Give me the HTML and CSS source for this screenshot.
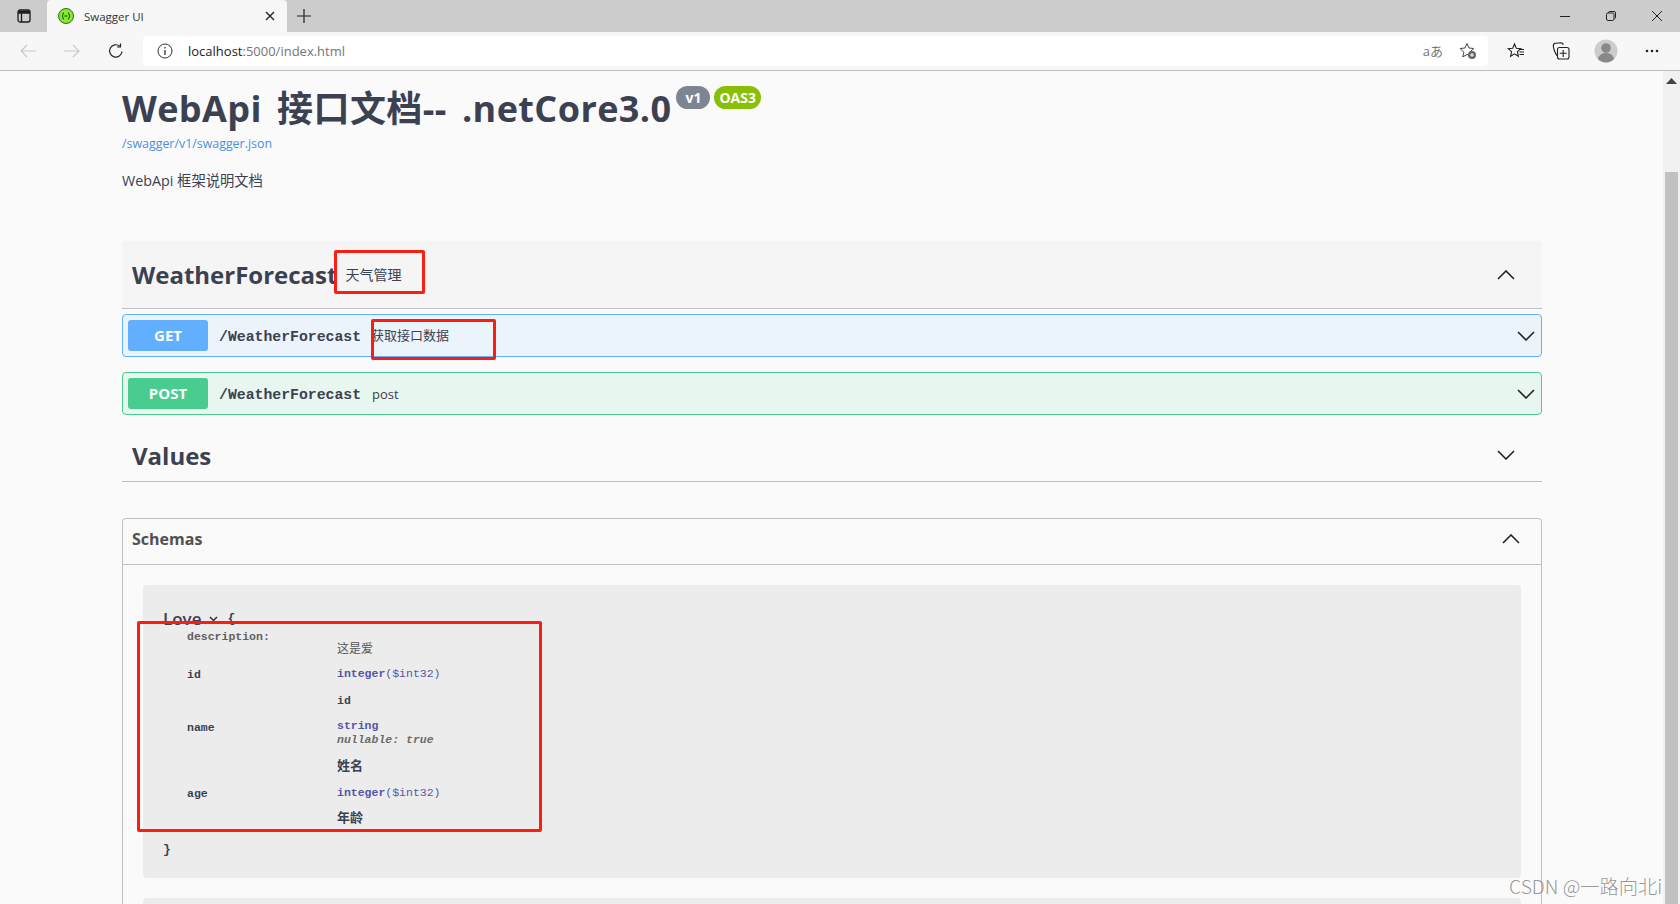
FILE: index.html
```html
<!DOCTYPE html>
<html lang="zh">
<head>
  <meta charset="UTF-8">
  <title>Swagger UI</title>
  <link rel="stylesheet" href="styles.css">
</head>
<body>
  <!-- Browser tab strip -->
  <div class="tabstrip">
    <div class="tab-actions">
      <svg width="16" height="16" viewBox="0 0 16 16" fill="none" stroke="#1a1a1a" stroke-width="1.3"><rect x="2" y="2" width="12" height="12" rx="2"/><path d="M2 5h12M5.500 5v9"/><path d="M2.500 2.800h11v2h-11z" fill="#1a1a1a" stroke="none"/></svg>
    </div>
    <div class="tab">
      <svg class="favicon" width="16" height="16" viewBox="0 0 16 16"><circle cx="8" cy="8" r="7.500" fill="#85ea2d" stroke="#2f6b1a" stroke-width="1"/><path d="M6 4.500C4.800 4.500 5.300 7.500 4 8c1.300.5.800 3.500 2 3.500M10 4.500c1.200 0 .7 3 2 3.500-1.300.5-.8 3.500-2 3.500M6.500 8h3" fill="none" stroke="#173b12" stroke-width="1"/></svg>
      <span class="tab-title">Swagger UI</span>
      <svg class="tab-close" width="10" height="10" viewBox="0 0 10 10" stroke="#222" stroke-width="1.400"><path d="M1 1l8 8M9 1l-8 8"/></svg>
    </div>
    <svg class="tab-new" width="14" height="14" viewBox="0 0 14 14" stroke="#222" stroke-width="1.200"><path d="M7 0v14M0 7h14"/></svg>
    <div class="win-controls">
      <svg width="10" height="10" viewBox="0 0 10 10" stroke="#222" stroke-width="1"><path d="M0 5.500h10"/></svg>
      <svg width="10" height="10" viewBox="0 0 10 10" fill="none" stroke="#222" stroke-width="1"><rect x=".5" y="2" width="7.500" height="7.500" rx="1.500"/><path d="M2.500 2V1.500A1 1 0 0 1 3.500.5h4.500a1.500 1.500 0 0 1 1.500 1.500v4.500a1 1 0 0 1-1 1"/></svg>
      <svg width="10" height="10" viewBox="0 0 10 10" stroke="#222" stroke-width="1"><path d="M0 0l10 10M10 0L0 10"/></svg>
    </div>
  </div>

  <!-- Address bar -->
  <div class="toolbar">
    <div class="nav-btn">
      <svg width="16" height="14" viewBox="0 0 16 14" fill="none" stroke="#c8c8c8" stroke-width="1.200"><path d="M16 7H1M7 1L1 7l6 6"/></svg>
    </div>
    <div class="nav-btn">
      <svg width="16" height="14" viewBox="0 0 16 14" fill="none" stroke="#c8c8c8" stroke-width="1.200"><path d="M0 7h15M9 1l6 6-6 6"/></svg>
    </div>
    <div class="nav-btn">
      <svg width="16" height="16" viewBox="0 0 16 16" fill="none" stroke="#222" stroke-width="1.200"><path d="M14 8.500A6.200 6.200 0 1 1 11.800 3.200"/><path d="M12.500.5v3.500H9"/></svg>
    </div>
    <div class="address">
      <svg class="info" width="16" height="16" viewBox="0 0 16 16" fill="none" stroke="#333" stroke-width="1"><circle cx="8" cy="8" r="7"/><path d="M8 7v5M8 4v1.500" stroke-width="1.300"/></svg>
      <span class="url"><span class="url-host">localhost</span>:5000/index.html</span>
      <span class="read-aloud">aあ</span>
      <svg class="star-add" width="18" height="18" viewBox="0 0 18 18"><path d="M8 1.500l2 4.500 4.800.5-3.600 3.200 1 4.700L8 12.500l-4.200 2.400 1-4.700L1.200 6.500 6 6z" fill="none" stroke="#444" stroke-width="1"/><circle cx="13" cy="13" r="4" fill="#666"/><path d="M13 11v4M11 13h4" stroke="#fff" stroke-width="1"/></svg>
    </div>
    <div class="tool-btn">
      <svg width="18" height="18" viewBox="0 0 18 18" fill="none" stroke="#222" stroke-width="1.100"><path d="M7.500 2l1.800 4.300 4.500.4-3.400 3 1 4.600-3.900-2.400-3.900 2.400 1-4.600-3.400-3 4.500-.4z"/><path d="M12 7.500h5M12.500 10h4.500M12.500 12.500h4.500"/></svg>
    </div>
    <div class="tool-btn">
      <svg width="18" height="18" viewBox="0 0 18 18" fill="none" stroke="#222" stroke-width="1.100"><path d="M5 13.500C3.500 12 1.500 7 1.300 4 1.200 2.500 2 1.500 3.500 1.300L9 .8c1.300 0 2 .7 2.300 2"/><rect x="5.500" y="5.500" width="11.500" height="11.500" rx="2"/><path d="M11.200 8v7M7.700 11.200h7"/></svg>
    </div>
    <div class="tool-btn">
      <svg width="24" height="24" viewBox="0 0 24 24"><circle cx="12" cy="12" r="11.500" fill="#ccc"/><circle cx="12" cy="9" r="4.800" fill="#888"/><path d="M4 20c1-5 5-6 8-6s7 1 8 6a11 11 0 0 1-16 0z" fill="#888"/></svg>
    </div>
    <div class="tool-btn more-btn">
      <svg width="14" height="4" viewBox="0 0 14 4" fill="#222"><circle cx="2" cy="2" r="1.300"/><circle cx="7" cy="2" r="1.300"/><circle cx="12" cy="2" r="1.300"/></svg>
    </div>
  </div>

  <!-- Page -->
  <div class="page">
    <div class="content">
      <div class="info-block">
        <h2 class="title">WebApi 接口文档-- .netCore3.0<span class="version">v1</span><span class="oas">OAS3</span></h2>
        <a class="spec-link" href="#">/swagger/v1/swagger.json</a>
        <p class="desc">WebApi 框架说明文档</p>
      </div>

      <div class="tag-header open">
        <span class="tag-name">WeatherForecast</span>
        <small class="tag-note">天气管理</small>
        <svg class="chevron" width="18" height="10" viewBox="0 0 18 10"><path d="M1 9l8-8 8 8"/></svg>
      </div>

      <div class="opblock get">
        <span class="method">GET</span>
        <span class="path">/WeatherForecast</span>
        <span class="summary summary-get">获取接口数据</span>
        <svg class="chevron" width="18" height="10" viewBox="0 0 18 10"><path d="M1 1l8 8 8-8"/></svg>
      </div>
      <div class="opblock post">
        <span class="method">POST</span>
        <span class="path">/WeatherForecast</span>
        <span class="summary">post</span>
        <svg class="chevron" width="18" height="10" viewBox="0 0 18 10"><path d="M1 1l8 8 8-8"/></svg>
      </div>

      <div class="tag-header values">
        <span class="tag-name">Values</span>
        <svg class="chevron" width="18" height="10" viewBox="0 0 18 10"><path d="M1 1l8 8 8-8"/></svg>
      </div>

      <section class="schemas">
        <div class="schemas-head">
          <span class="schemas-title">Schemas</span>
          <svg class="chevron" width="18" height="10" viewBox="0 0 18 10"><path d="M1 9l8-8 8 8"/></svg>
        </div>
        <div class="schemas-body">
          <div class="model">
            <div class="model-title">
              <span class="model-name">Love</span>
              <svg class="model-toggle" width="9" height="6" viewBox="0 0 9 6" fill="none" stroke="#333" stroke-width="1.500"><path d="M1 1l3.500 3.500L8 1"/></svg>
              <span class="brace">{</span>
            </div>
            <div class="props">
              <div class="prop-key desc-key">description:</div>
              <div class="prop-val desc-val">这是爱</div>

              <div class="prop-key">id</div>
              <div class="prop-val"><span class="type">integer</span><span class="format">($int32)</span></div>
              <div class="prop-key"></div>
              <div class="prop-val note">id</div>

              <div class="prop-key">name</div>
              <div class="prop-val name-val"><span class="type">string</span><br><em class="extra">nullable: true</em></div>
              <div class="prop-key"></div>
              <div class="prop-val note note-cjk">姓名</div>

              <div class="prop-key">age</div>
              <div class="prop-val"><span class="type">integer</span><span class="format">($int32)</span></div>
              <div class="prop-key"></div>
              <div class="prop-val note note-cjk">年龄</div>
            </div>
            <div class="brace close">}</div>
          </div>
          <div class="model"></div>
        </div>
      </section>
    </div>
    <div class="scrollbar">
      <svg width="11" height="6" viewBox="0 0 11 6" fill="#444"><path d="M5.500 0L11 6H0z"/></svg>
      <div class="thumb"></div>
    </div>

    <!-- Annotations drawn on top of the screenshot -->
    <div class="mark mark-tag"></div>
    <div class="mark mark-get"></div>
    <div class="mark mark-model"></div>
    <div class="watermark">CSDN @一路向北i</div>
  </div>
</body>
</html>
```

FILE: styles.css
```css
* { margin: 0; padding: 0; box-sizing: border-box; }
html, body { width: 100%; height: 100%; overflow: hidden; background: #fafafa; }
body {
  display: flex;
  flex-direction: column;
  font-family: "Open Sans", "Noto Sans CJK SC", sans-serif;
  color: #3b4151;
}

/* Tab strip */
.tabstrip {
  display: flex;
  align-items: center;
  height: 32px;
  background: #cccccc;
}
.tab-actions {
  display: flex;
  justify-content: center;
  align-items: center;
  width: 47px;
  height: 32px;
}
.tab {
  display: flex;
  align-items: center;
  width: 240px;
  height: 32px;
  padding: 0 12px 0 11px;
  background: #f7f7f7;
  border-radius: 4px 4px 0 0;
}
.tab-title {
  flex: 1;
  margin-left: 10px;
  font-size: 11.500px;
  color: #333;
}
.tab-new { margin-left: 10px; }
.win-controls {
  display: flex;
  gap: 36px;
  margin-left: auto;
  padding-right: 18px;
}

/* Toolbar */
.toolbar {
  display: flex;
  align-items: center;
  height: 39px;
  padding: 0 5px 1px 6px;
  background: #f7f7f7;
  border-bottom: 1px solid #bdbdbd;
}
.nav-btn {
  display: flex;
  justify-content: center;
  align-items: center;
  width: 44px;
}
.address {
  display: flex;
  align-items: center;
  width: 1345px;
  height: 30px;
  margin: 0 5px 0 5px;
  padding: 0 11px 0 14px;
  background: #fff;
  border-radius: 4px;
}
.url {
  flex: 1;
  margin-left: 15px;
  font-size: 13px;
  color: #767676;
}
.url-host { color: #222; }
.read-aloud {
  margin-right: 16px;
  font-size: 13px;
  color: #777;
}
.tool-btn {
  display: flex;
  justify-content: center;
  align-items: center;
  width: 45px;
}
.more-btn { margin-left: 1px; }

/* Page */
.page {
  position: relative;
  flex: 1;
  display: flex;
  min-height: 0;
  overflow: hidden;
}
.content {
  flex: 1;
  min-width: 0;
  padding: 0 121px 0 122px;
}
.scrollbar {
  position: relative;
  z-index: 2;
  display: flex;
  flex-direction: column;
  align-items: center;
  flex: none;
  width: 17px;
  padding-top: 7px;
  background: #f1f1f1;
}
.thumb {
  flex: 1;
  width: 13px;
  margin-top: 88px;
  background: #c1c1c1;
}

/* Title block */
.info-block {
  height: 170px;
  padding-top: 13px;
}
.title {
  font-size: 36px;
  line-height: 50px;
  font-weight: 700;
  letter-spacing: 0.4px;
  word-spacing: 5.500px;
  white-space: nowrap;
}
.version, .oas {
  position: relative;
  top: -19px;
  display: inline-block;
  height: 23px;
  padding: 0 5px;
  margin-left: 5px;
  border-radius: 12px;
  font-size: 14px;
  line-height: 23px;
  letter-spacing: 0;
  color: #fff;
  vertical-align: baseline;
}
.version { background: #7d8492; margin-left: 5px; padding: 0 9px; }
.oas { background: #89bf04; margin-left: 4px; }
.spec-link {
  display: block;
  margin-top: 2px;
  font-size: 12.400px;
  line-height: 16px;
  color: #4990e2;
  text-decoration: none;
}
.desc {
  margin-top: 19px;
  font-size: 14.300px;
  line-height: 20px;
}

/* Tag sections */
.tag-header {
  display: flex;
  align-items: center;
  height: 68px;
  padding: 0 27px 0 10px;
  border-bottom: 1px solid #bfc0c3;
}
.tag-header.open { background: #f5f5f5; }
.tag-header.values {
  height: 67px;
  padding-top: 14px;
}
.tag-name {
  font-size: 24px;
  font-weight: 700;
  white-space: nowrap;
}
.tag-note {
  margin-left: 8px;
  margin-bottom: 1px;
  font-size: 14px;
}
.chevron {
  margin-left: auto;
  fill: none;
  stroke: #222;
  stroke-width: 1.600;
  flex: none;
}

/* Operation blocks */
.opblock {
  display: flex;
  align-items: center;
  height: 43px;
  padding: 0 6px 0 5px;
  border: 1px solid;
  border-radius: 4px;
}
.opblock.get {
  margin-top: 5px;
  background: #ebf3fb;
  border-color: #61affe;
}
.opblock.post {
  margin-top: 15px;
  background: #e8f6f0;
  border-color: #49cc90;
}
.method {
  width: 80px;
  height: 31px;
  border-radius: 3px;
  font-size: 15px;
  font-weight: 700;
  line-height: 30px;
  text-align: center;
  color: #fff;
}
.get .method { background: #61affe; }
.post .method { background: #49cc90; }
.path {
  margin-left: 11px;
  padding-top: 2px;
  font-family: "Liberation Mono", monospace;
  font-size: 14.800px;
  font-weight: 700;
}
.summary {
  margin-left: 11px;
  font-size: 13px;
}
.summary-get {
  margin-left: 10px;
  padding-bottom: 2px;
}

/* Schemas */
.schemas {
  margin-top: 36px;
  border: 1px solid #bfc0c3;
  border-radius: 4px 4px 0 0;
  border-bottom: 0;
}
.schemas-head {
  display: flex;
  align-items: center;
  height: 46px;
  padding: 0 21px 6px 9px;
  border-bottom: 1px solid #bfc0c3;
}
.schemas-title {
  font-size: 16px;
  font-weight: 700;
  color: #505050;
}
.schemas-body {
  display: flex;
  flex-direction: column;
  gap: 20px;
  padding: 20px 20px 0;
}
.model {
  flex: none;
  height: 293px;
  padding: 21px 20px 0;
  background: #ececec;
  border-radius: 4px;
  font-family: "Liberation Mono", "Noto Sans CJK SC", monospace;
  font-size: 11.500px;
  font-weight: 700;
}
.model-title {
  display: flex;
  align-items: center;
  height: 24px;
}
.model-name {
  font-family: "Open Sans", sans-serif;
  font-size: 17px;
  font-weight: 600;
}
.model-toggle { margin: 2px 10px 0 7px; }
.brace { font-size: 13px; }
.props {
  display: grid;
  grid-template-columns: 150px 1fr;
  grid-template-rows: 38px 26px 27px 39px 27px 25px 26px;
  margin-top: -2px;
  padding-left: 24px;
  line-height: 16px;
}
.prop-key { padding-top: 1px; }
.desc-key { font-weight: 700; color: #606060; }
.desc-val {
  padding-top: 12px;
  font-family: "Noto Sans CJK SC", sans-serif;
  font-size: 12px;
  font-weight: 400;
  color: #555;
}
.name-val { line-height: 14px; }
.type { color: #55a; }
.format { font-weight: 400; color: #55a; }
.extra { font-weight: 700; color: #6b6b6b; }
.note { padding-top: 1px; }
.note-cjk { font-size: 13px; }
.close { margin-top: 6px; line-height: 16px; }

/* Red annotation boxes */
.mark {
  position: absolute;
  border: 3px solid #fb1c12;
  border-radius: 2px;
  z-index: 3;
}
.mark-tag { left: 334px; top: 179px; width: 91px; height: 44px; }
.mark-get { left: 371px; top: 248px; width: 125px; height: 41px; }
.mark-model { left: 137px; top: 550px; width: 405px; height: 211px; }

.watermark {
  position: absolute;
  left: 1509px;
  top: 801px;
  z-index: 4;
  font-family: "Noto Sans CJK SC", sans-serif;
  font-size: 19.300px;
  font-weight: 300;
  line-height: 28px;
  white-space: nowrap;
  color: rgba(125, 125, 125, 0.8);
}
```
